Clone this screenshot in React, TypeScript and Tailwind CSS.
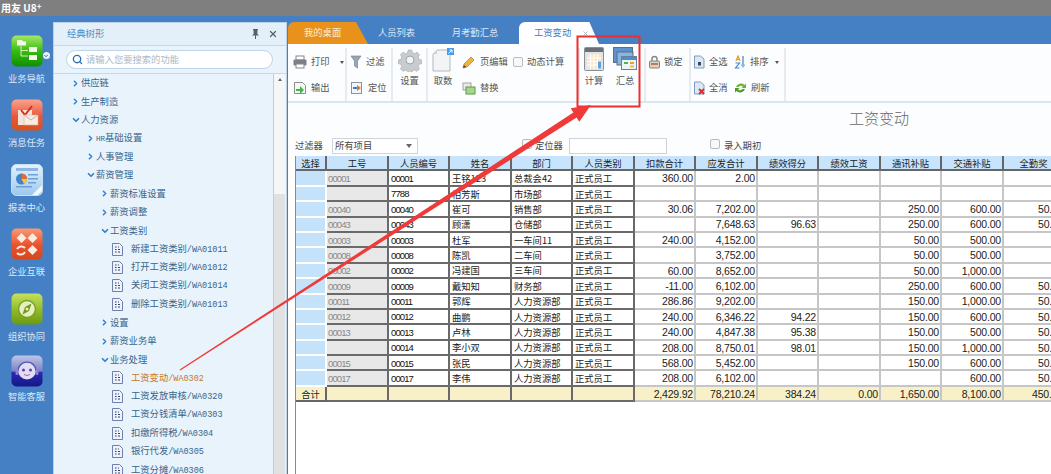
import React from "react";
import { ChevronDown, ChevronRight, Search, X } from "lucide-react";

const cjk = '"Noto Sans CJK SC", "Liberation Sans", sans-serif';

const tree: { t: string; l: number; k: "o" | "c" | "f"; a?: boolean }[] = [
  { t: "供应链", l: 0, k: "c" },
  { t: "生产制造", l: 0, k: "c" },
  { t: "人力资源", l: 0, k: "o" },
  { t: "HR基础设置", l: 1, k: "c" },
  { t: "人事管理", l: 1, k: "c" },
  { t: "薪资管理", l: 1, k: "o" },
  { t: "薪资标准设置", l: 2, k: "c" },
  { t: "薪资调整", l: 2, k: "c" },
  { t: "工资类别", l: 2, k: "o" },
  { t: "新建工资类别/WA01011", l: 3, k: "f" },
  { t: "打开工资类别/WA01012", l: 3, k: "f" },
  { t: "关闭工资类别/WA01014", l: 3, k: "f" },
  { t: "删除工资类别/WA01013", l: 3, k: "f" },
  { t: "设置", l: 2, k: "c" },
  { t: "薪资业务单", l: 2, k: "c" },
  { t: "业务处理", l: 2, k: "o" },
  { t: "工资变动/WA0302", l: 3, k: "f", a: true },
  { t: "工资发放审核/WA0320", l: 3, k: "f" },
  { t: "工资分钱清单/WA0303", l: 3, k: "f" },
  { t: "扣缴所得税/WA0304", l: 3, k: "f" },
  { t: "银行代发/WA0305", l: 3, k: "f" },
  { t: "工资分摊/WA0306", l: 3, k: "f" },
];

const headers = ["选择", "工号", "人员编号", "姓名", "部门", "人员类别", "扣款合计", "应发合计", "绩效得分", "绩效工资", "通讯补贴", "交通补贴", "全勤奖"];

const rows: string[][] = [
  ["00001", "00001", "王铭123", "总裁会42", "360.00", "2.00", "", "", "", "", ""],
  ["", "7788", "柏芳斯", "市场部", "", "", "", "", "", "", ""],
  ["00040", "00040", "崔可", "销售部", "30.06", "7,202.00", "", "", "250.00", "600.00", "50.00"],
  ["00043", "00043", "顾潇", "仓储部", "", "7,648.63", "96.63", "", "250.00", "600.00", "50.00"],
  ["00003", "00003", "杜军", "一车间11", "240.00", "4,152.00", "", "", "50.00", "500.00", ""],
  ["00008", "00008", "陈凯", "二车间", "", "3,752.00", "", "", "50.00", "500.00", ""],
  ["00002", "00002", "冯建国", "三车间", "60.00", "8,652.00", "", "", "50.00", "1,000.00", ""],
  ["00009", "00009", "戴知知", "财务部", "-11.00", "6,102.00", "", "", "250.00", "600.00", "50.00"],
  ["00011", "00011", "郭辉", "人力资源部", "286.86", "9,202.00", "", "", "150.00", "1,000.00", "50.00"],
  ["00012", "00012", "曲鹏", "人力资源部", "240.00", "6,346.22", "94.22", "", "150.00", "600.00", "50.00"],
  ["00013", "00013", "卢林", "人力资源部", "240.00", "4,847.38", "95.38", "", "150.00", "500.00", "50.00"],
  ["", "00014", "李小双", "人力资源部", "208.00", "8,750.01", "98.01", "", "150.00", "1,000.00", "50.00"],
  ["00015", "00015", "张民", "人力资源部", "568.00", "5,452.00", "", "", "150.00", "600.00", "50.00"],
  ["00017", "00017", "李伟", "人力资源部", "208.00", "6,102.00", "", "", "", "600.00", "50.00"],
];
const totals = ["2,429.92", "78,210.24", "384.24", "0.00", "1,650.00", "8,100.00", "450.00"];

function DocIcon() {
  return (
    <svg width="11" height="13" viewBox="0 0 11 13" className="shrink-0">
      <path d="M.5.5h7l3 3v9H.5z" fill="#eef2fa" stroke="#6f7fae" />
      <path d="M3 4h1.6M3 6.5h1.6M3 9h1.6M6 6.5h2M6 9h2M6 4h1" stroke="#34406e" strokeWidth="1" />
    </svg>
  );
}

function TreeLabel({ t }: { t: string }) {
  const i = t.indexOf("/");
  if (t.startsWith("HR")) {
    return <><span className="font-['Liberation_Mono'] text-[7.500px]">HR</span>{t.slice(2)}</>;
  }
  if (i < 0) return <>{t}</>;
  return <>{t.slice(0, i)}<span className="font-['Liberation_Mono'] text-[8.500px]">{t.slice(i)}</span></>;
}

function TreeRow({ t, l, k, a }: { t: string; l: number; k: string; a?: boolean }) {
  const pad = l === 3 ? "pl-[58px]" : l === 2 ? "pl-[46px]" : l === 1 ? "pl-[32px]" : "pl-[17px]";
  return (
    <div className={`flex h-[18.43px] items-center ${pad}`}>
      {k === "c" && <ChevronRight size={9} strokeWidth={4} color="#2f7fd4" className="mr-[1px] shrink-0" />}
      {k === "o" && <ChevronDown size={10} strokeWidth={4} color="#2f7fd4" className="shrink-0" />}
      {k === "f" && <DocIcon />}
      <span className={`${k === "f" ? "ml-[8px]" : ""} whitespace-nowrap text-[9.3px] ${a ? "text-[#c9782a]" : "text-[#37658c]"}`}><TreeLabel t={t} /></span>
    </div>
  );
}

function RailItem({ icon, label, gap, lg = "mt-[4px]" }: { icon: React.ReactNode; label: string; gap: string; lg?: string }) {
  return (
    <div className={`flex w-[53px] flex-col items-center ${gap}`}>
      {icon}
      <span className={`${lg} whitespace-nowrap text-[9.3px] leading-[14px] text-[#dbe9f7]`}>{label}</span>
    </div>
  );
}

const IconBox = ({ children }: { children: React.ReactNode }) => (
  <svg width="32" height="32" viewBox="0 0 32 32" className="block">{children}</svg>
);

function NavIcon() {
  return (
    <div className="relative">
      <IconBox>
        <defs>
          <linearGradient id="g1" x1="0" y1="0" x2="0" y2="1"><stop offset="0" stopColor="#a4ea63" /><stop offset=".5" stopColor="#37bb12" /><stop offset="1" stopColor="#0f8f00" /></linearGradient>
        </defs>
        <rect x=".5" y=".5" width="31" height="31" rx="5" fill="url(#g1)" />
        <path d="M6 5h5l1 1.5h3v4H6z" fill="#f5f8e8" />
        <path d="M10 11v10h7M10 15.5h7" stroke="#d5f3b5" strokeWidth="1" fill="none" />
        <rect x="18" y="12" width="8" height="5" fill="#f5f8e8" />
        <rect x="18" y="20" width="8" height="5" fill="#f5f8e8" />
      </IconBox>
      <span className="absolute -right-[7px] top-[17px] flex h-[7px] w-[7px] items-center justify-center rounded-full bg-[#e8f0f8]">
        <ChevronDown size={6} strokeWidth={4} color="#3a6fa8" />
      </span>
    </div>
  );
}
function MsgIcon() {
  return (
    <IconBox>
      <defs><linearGradient id="g2" x1="0" y1="0" x2="0" y2="1"><stop offset="0" stopColor="#f8a48c" /><stop offset=".55" stopColor="#e8563a" /><stop offset="1" stopColor="#d8501c" /></linearGradient></defs>
      <rect x=".5" y=".5" width="31" height="31" rx="5" fill="url(#g2)" />
      <rect x="7" y="11" width="14" height="15" fill="#f3e4da" />
      <path d="M10 11l4 5 7-9" stroke="#d92b20" strokeWidth="2" fill="none" />
      <rect x="13" y="16" width="14" height="10" fill="#f7ece4" stroke="#d9b3a0" strokeWidth=".6" />
      <path d="M13 16l7 5 7-5" stroke="#cf9d88" strokeWidth=".8" fill="none" />
    </IconBox>
  );
}
function ReportIcon() {
  return (
    <IconBox>
      <defs><linearGradient id="g3" x1="0" y1="0" x2="0" y2="1"><stop offset="0" stopColor="#e4f3fd" /><stop offset="1" stopColor="#9cc7ee" /></linearGradient></defs>
      <rect x=".5" y=".5" width="31" height="31" rx="5" fill="url(#g3)" stroke="#c9dff2" />
      <rect x="5" y="4" width="22" height="3" fill="#8db7e2" />
      <rect x="17" y="10" width="10" height="1.5" fill="#6f9fd3" />
      <rect x="17" y="14" width="10" height="1.5" fill="#6f9fd3" />
      <rect x="17" y="18" width="8" height="1.5" fill="#6f9fd3" />
      <rect x="5" y="22" width="16" height="1.5" fill="#6f9fd3" />
      <circle cx="10.500" cy="15" r="5.500" fill="#3f86c8" />
      <path d="M10.500 15V9.500a5.500 5.500 0 0 1 5.500 5.500z" fill="#e56a2b" />
      <path d="M10.500 15h5.500a5.500 5.500 0 0 1-3 4.900z" fill="#f2c83a" />
      <path d="M21 31l10-10v6l-4 4z" fill="#f2f8fd" />
    </IconBox>
  );
}
function LinkIcon() {
  return (
    <IconBox>
      <defs><linearGradient id="g4" x1="0" y1="0" x2="0" y2="1"><stop offset="0" stopColor="#f99a74" /><stop offset=".55" stopColor="#e8512c" /><stop offset="1" stopColor="#d6471d" /></linearGradient></defs>
      <rect x=".5" y=".5" width="31" height="31" rx="5" fill="url(#g4)" />
      <path d="M10.500 5l5 5-5 5-5-5zM21.500 5l5 5-5 5-5-5zM21.500 17l5 5-5 5-5-5z" fill="#fbeadf" />
      <path d="M6 21a5 5 0 0 1 8-1M14 24a5 5 0 0 1-8 1" stroke="#fbeadf" strokeWidth="2" fill="none" />
    </IconBox>
  );
}
function OrgIcon() {
  return (
    <IconBox>
      <defs><linearGradient id="g5" x1="0" y1="0" x2="0" y2="1"><stop offset="0" stopColor="#c5e25a" /><stop offset=".6" stopColor="#8ab526" /><stop offset="1" stopColor="#6c9a10" /></linearGradient></defs>
      <rect x=".5" y=".5" width="31" height="31" rx="5" fill="url(#g5)" />
      <circle cx="16" cy="16" r="8.500" fill="#e7eec2" stroke="#79a01f" strokeWidth="1.500" />
      <path d="M20.500 10.500l-2.500 7.500-6.500 3.500 2.500-7.500z" fill="#6f9a18" />
      <circle cx="16" cy="16" r="1.500" fill="#e7eec2" />
    </IconBox>
  );
}
function ServiceIcon() {
  return (
    <IconBox>
      <defs><linearGradient id="g6" x1="0" y1="0" x2="0" y2="1"><stop offset="0" stopColor="#bfc6e6" /><stop offset=".5" stopColor="#7b83c6" /><stop offset=".55" stopColor="#2a2ab0" /><stop offset="1" stopColor="#15158a" /></linearGradient></defs>
      <rect x=".5" y=".5" width="31" height="31" rx="5" fill="url(#g6)" />
      <circle cx="16" cy="15.500" r="9" fill="#e3ddf3" />
      <path d="M7 16a9 9 0 0 1 18 0" stroke="#5a5ab5" strokeWidth="1.500" fill="none" />
      <rect x="4.500" y="14" width="3" height="6" rx="1.500" fill="#8e82d8" />
      <rect x="24.500" y="14" width="3" height="6" rx="1.500" fill="#8e82d8" />
      <circle cx="12.500" cy="15" r="1.500" fill="#5a3fb0" />
      <circle cx="19.500" cy="15" r="1.500" fill="#5a3fb0" />
      <path d="M13 19.500q3 2 6 0" stroke="#b85ab0" strokeWidth="1" fill="none" />
    </IconBox>
  );
}

const S = ({ children, w = 14, h = 14 }: { children: React.ReactNode; w?: number; h?: number }) => (
  <svg width={w} height={h} viewBox={`0 0 ${w} ${h}`} className="shrink-0">{children}</svg>
);

const Caret = () => <span className="ml-[6px] h-0 w-0 border-x-[2.500px] border-t-[3px] border-x-transparent border-t-[#555]" />;

function Tool({ icon, label, children }: { icon: React.ReactNode; label: string; children?: React.ReactNode }) {
  return (
    <div className="flex h-[26px] items-center whitespace-nowrap text-[9.3px] text-[#555]">
      {icon}
      <span className="ml-[4px]">{label}</span>
      {children}
    </div>
  );
}

function BigTool({ icon, label }: { icon: React.ReactNode; label: string }) {
  return (
    <div className="flex flex-col items-center text-[9.3px] text-[#555]">
      <div className="flex h-[25px] items-start justify-center">{icon}</div>
      <span className="leading-[14px]">{label}</span>
    </div>
  );
}

const Sep = () => <div className="h-[53px] w-[2px] shrink-0 self-start bg-[#e6ebf2]" />;

const Group = ({ w, children }: { w: string; children: React.ReactNode }) => (
  <div className={`flex ${w} shrink-0 flex-col`}>{children}</div>
);

const Check = () => <span className="inline-block h-[10px] w-[10px] shrink-0 rounded-[2px] border border-[#b8bcc2] bg-[#f7f8f9]" />;

function Cell({ children, cls }: { children?: React.ReactNode; cls: string }) {
  return <div className={`flex min-w-0 items-center overflow-hidden whitespace-nowrap pt-[2px] ${cls}`}>{children}</div>;
}

const numFont = "font-['Liberation_Sans'] text-[10.500px] tracking-[-0.200px]";
const codeFont = "font-['Liberation_Sans'] text-[9.500px] tracking-[-0.900px]";
const darkB = "border-r-2 border-b-2 border-[#6a6a6a]";
const lightB = "border-r-2 border-b-2 border-[#c6c6c6]";

export default function App() {
  return (
    <div className="relative flex h-[474px] w-[1051px] flex-col overflow-hidden bg-[#4580c4]" style={{ fontFamily: cjk }}>
      {/* title bar */}
      <div className="flex h-[16px] shrink-0 items-center bg-[#7f7f7f] pl-[1px] text-[10px] font-bold leading-none text-white">
        用友 U8<span className="mb-[4px] text-[8px] leading-none">+</span>
      </div>

      <div className="flex min-h-0 flex-1">
        {/* rail */}
        <div className="flex w-[53px] shrink-0 flex-col pt-[19px]">
          <RailItem icon={<NavIcon />} label="业务导航" gap="" />
          <RailItem icon={<MsgIcon />} label="消息任务" gap="mt-[14px]" />
          <RailItem icon={<ReportIcon />} label="报表中心" gap="mt-[15px]" />
          <RailItem icon={<LinkIcon />} label="企业互联" gap="mt-[14px]" />
          <RailItem icon={<OrgIcon />} label="组织协同" gap="mt-[15px]" />
          <RailItem icon={<ServiceIcon />} label="智能客服" gap="mt-[12px]" lg="mt-[2px]" />
        </div>

        {/* tree panel */}
        <div className="mt-[6px] flex w-[234px] shrink-0 flex-col border border-b-0 border-[#bcd2e8] bg-[#e9f3fb]">
          <div className="flex h-[23px] shrink-0 items-center border-b border-[#c5d8ea] bg-[#e4f0f9] pl-[13px] pr-[8px]">
            <span className="text-[9.3px] text-[#4f8cc4]">经典树形</span>
            <svg width="9" height="10" viewBox="0 0 9 10" className="ml-auto mr-[8px]">
              <path d="M2 0h5v1l-.6.500V5l1.600 1.500H1L2.600 5V1.500L2 1zM4 6.500h1V10H4z" fill="#55606c" />
            </svg>
            <X size={10} strokeWidth={3} color="#55606c" />
          </div>
          <div className="flex h-[28px] shrink-0 items-center border-b border-[#c5d8ea] pl-[12px]">
            <div className="flex h-[19px] w-[207px] items-center rounded-full border border-[#bcd3e8] bg-white pl-[5px]">
              <Search size={11} strokeWidth={3} color="#2c6fb5" />
              <span className="ml-[3px] text-[9.3px] text-[#a9b9c8]">请输入您要搜索的功能</span>
            </div>
          </div>
          <div className="flex min-h-0 flex-1">
            <div className="min-w-0 flex-1 overflow-hidden">
              {tree.map((r) => <TreeRow key={r.t} {...r} />)}
            </div>
            <div className="mr-[1px] flex w-[12px] shrink-0 flex-col items-center border-l border-[#c8ccd0] bg-[#f4f6f8]">
              <span className="mt-[4px] h-0 w-0 border-x-[2.500px] border-b-[3px] border-x-transparent border-b-[#666]" />
              <div className="mt-[113px] w-full flex-1 bg-[#dfe1e3]" />
            </div>
          </div>
        </div>

        {/* main */}
        <div className="ml-[1px] flex min-w-0 flex-1 flex-col overflow-hidden">
          {/* tabs */}
          <div className="flex h-[28px] shrink-0 items-end text-[9.3px]">
            <div className="flex h-[22px] w-[80px] items-center rounded-tl-[6px] bg-[#e8921c] pl-[16px] text-[#fbeed8] [clip-path:polygon(0_0,85%_0,100%_100%,0_100%)]">我的桌面</div>
            <div className="flex h-[22px] w-[57px] items-center justify-center whitespace-nowrap text-[#dce9f7]">人员列表</div>
            <div className="ml-[27px] flex h-[22px] w-[46px] items-center justify-center whitespace-nowrap text-[#dce9f7]">月考勤汇总</div>
            <div className="ml-[21px] flex h-[22px] w-[80px] items-center rounded-t-[6px] bg-white pl-[15px] text-[#3f80c4] [clip-path:polygon(0_0,88%_0,100%_100%,0_100%)]">
              工资变动
              <X size={7} strokeWidth={3} color="#aab4be" className="ml-[11px]" />
            </div>
          </div>

          <div className="flex min-h-0 flex-1 flex-col bg-[#fcfdff]">
            {/* toolbar */}
            <div className="flex h-[59px] shrink-0 border-b-[2px] border-[#dbe5f0] pt-[4px]">
              <Group w="w-[57px] pl-[5px] pt-[1px]">
                <Tool label="打印" icon={<S><rect x="3" y="1" width="8" height="4" fill="#fff" stroke="#888" /><rect x=".5" y="4.500" width="13" height="6" rx="1" fill="#7a8088" /><rect x="3" y="9" width="8" height="4" fill="#fff" stroke="#888" /></S>}><span className="ml-[4px]" /><Caret /></Tool>
                <Tool label="输出" icon={<S><path d="M1.500 1.500h8l3 3v8h-11z" fill="#f6f8f6" stroke="#8a918a" /><path d="M3 8h4V5l4 4-4 4v-3H3z" fill="#46b84a" /></S>} />
              </Group>
              <Sep />
              <Group w="w-[44px] pl-[3px] pt-[1px]">
                <Tool label="过滤" icon={<S w={12}><path d="M1 1h10L7.500 6v7l-3-2V6z" fill="#9aa6b4" stroke="#6e7a88" strokeWidth=".6" /></S>} />
                <Tool label="定位" icon={<S><rect x="1.500" y="1.500" width="10" height="11" fill="#f1f4f8" stroke="#8a94a0" /><path d="M3 7h5" stroke="#3a7ac0" strokeWidth="2" /><path d="M7 4l4 3-4 3z" fill="#e0762a" /></S>} />
              </Group>
              <Sep />
              <div className="w-[33px] shrink-0">
                <BigTool label="设置" icon={<svg width="24" height="24" viewBox="0 0 24 24"><path d="M10 1h4l.7 3 2.500 1 2.600-1.600 2.800 2.800-1.600 2.600 1 2.500 3 .7v4l-3 .7-1 2.500 1.600 2.600-2.800 2.800-2.600-1.600-2.500 1-.7 3h-4l-.7-3-2.500-1-2.600 1.600-2.800-2.800 1.600-2.600-1-2.500-3-.7v-4l3-.7 1-2.500L1.500 6.200l2.800-2.800 2.600 1.600 2.500-1z" transform="translate(1.200 1.200) scale(.9)" fill="#c9cccf" stroke="#a8acb0" strokeWidth=".8" /><circle cx="12" cy="12" r="4" fill="#f2f3f4" stroke="#a0a4a8" /></svg>} />
              </div>
              <Sep />
              <div className="w-[30px] shrink-0">
                <BigTool label="取数" icon={<svg width="22" height="24" viewBox="0 0 22 24"><path d="M5 2h13v21H1V6z" fill="#f3f4f5" stroke="#b4b8bc" /><path d="M5 2v4H1z" fill="#d4d7da" /><rect x="15" y="0" width="7" height="7" fill="#4a9be8" /><path d="M16.500 5.500l3.500-3.500M17.500 2H20v2.500" stroke="#fff" fill="none" /></svg>} />
              </div>
              <Group w="w-[55px] pl-[4px] pt-[1px]">
                <Tool label="页编辑" icon={<S><path d="M1 13l1-4 7-7 3 3-7 7z" fill="#f0b43a" stroke="#a36a1a" strokeWidth=".6" /><path d="M1 13l1-3 2 2z" fill="#444" /></S>} />
                <Tool label="替换" icon={<S><rect x="1" y="2" width="8" height="7" fill="#e8eaec" stroke="#a0a4a8" /><rect x="4" y="6" width="9" height="7" fill="#a6d68a" stroke="#5f9a44" /></S>} />
              </Group>
              <div className="w-[65px] shrink-0 pt-[1px]">
                <Tool label="动态计算" icon={<Check />} />
              </div>
              <Sep />
              <div className="flex w-[64px] shrink-0 pl-[3px]">
                <div className="w-[22px]"><BigTool label="计算" icon={<svg width="20" height="24" viewBox="0 0 20 24" className="-mt-[1px]"><rect x=".5" y=".5" width="19" height="23" rx="1" fill="#dfe3e6" stroke="#8a8f94" /><rect x="1" y="1" width="18" height="4" fill="#6a7078" /><rect x="3" y="7" width="14" height="15" fill="#f6e7cf" /><path d="M3 11h14M3 14.500h14M3 18h14M6.500 7v15M10 7v15M13.500 7v15" stroke="#fff" /><rect x="14" y="14.500" width="3" height="7" fill="#5aa3e0" /></svg>} /></div>
                <div className="ml-[8px] w-[24px]"><BigTool label="汇总" icon={<svg width="24" height="24" viewBox="0 0 24 24" className="-mt-[1px]"><rect x=".5" y=".5" width="19" height="15" fill="#5c93cf" stroke="#5a6f88" /><rect x="4" y="5" width="16" height="13" fill="#8ab6de" stroke="#5a6f88" /><rect x="8.500" y="9.500" width="15" height="13" fill="#eef3f7" stroke="#6a7f98" /><rect x="9" y="10" width="14" height="3" fill="#4b8fd0" /><rect x="11" y="15" width="4" height="2" fill="#5bb04a" /><rect x="17" y="15" width="4" height="2" fill="#e8a02a" /><rect x="17" y="18.500" width="4" height="2" fill="#f0c040" /></svg>} /></div>
              </div>
              <Sep />
              <Group w="w-[43px] pl-[3px] pt-[1px]">
                <Tool label="锁定" icon={<S w={11}><path d="M3 6V4a2.500 2.500 0 0 1 5 0v2" stroke="#888" strokeWidth="1.500" fill="none" /><rect x=".5" y="6" width="10" height="7" rx="1" fill="#d8d2c4" stroke="#8a8478" /><path d="M2 9h7" stroke="#c25a2a" strokeWidth="1.500" /></S>} />
              </Group>
              <Sep />
              <Group w="w-[43px] pl-[2px] pt-[1px]">
                <Tool label="全选" icon={<S w={12}><path d="M1.500 1h6l3.500 3v9h-9.500z" fill="#dbe8f6" stroke="#7f9cc0" /><rect x="5" y="7" width="3" height="3.500" fill="#445" /></S>} />
                <Tool label="全消" icon={<S w={12}><path d="M1.500 1h6l3.500 3v9h-9.500z" fill="#dbe8f6" stroke="#7f9cc0" /><path d="M6 8l5 5M11 8l-5 5" stroke="#e02a2a" strokeWidth="1.800" /></S>} />
              </Group>
              <Group w="w-[50px] pt-[1px]">
                <Tool label="排序" icon={<S w={12}><path d="M2 6l2-5 2 5M3 4.500h2" stroke="#e89a1c" strokeWidth="1.200" fill="none" /><path d="M1.500 8h4l-4 5h4" stroke="#3a8ad8" strokeWidth="1.200" fill="none" /><path d="M9 1v10" stroke="#8ab4e0" strokeWidth="2" /><path d="M6.500 9.500L9 13l2.500-3.500z" fill="#8ab4e0" /></S>}><Caret /></Tool>
                <Tool label="刷新" icon={<S w={13}><path d="M2 6a5 4.500 0 0 1 8.500-2L12 2.500V7H7.500l1.500-1.500A3 2.500 0 0 0 4.500 6z" fill="#6eb52e" /><path d="M11 8a5 4.500 0 0 1-8.500 2L1 11.500V7h4.500L4 8.500A3 2.500 0 0 0 8.500 8z" fill="#4f9a22" /></S>} />
              </Group>
              <Sep />
              <div className="flex-1" />
            </div>

            {/* title */}
            <div className="flex h-[32px] shrink-0 items-end justify-end pb-[6px] pr-[142px]">
              <span className="text-[15px] font-light leading-[20px] text-[#666]" style={{ fontFamily: '"Liberation Serif", "Noto Sans CJK SC", serif' }}>工资变动</span>
            </div>

            {/* filter */}
            <div className="flex h-[21px] shrink-0 items-center pl-[7px] text-[9.3px] text-[#444]">
              <span className="w-[37px]">过滤器</span>
              <div className="flex h-[16px] w-[86px] items-center justify-between border border-[#d0d4d8] bg-white pl-[2px] pr-[5px]">
                所有项目
                <span className="h-0 w-0 border-x-[3px] border-t-[4px] border-x-transparent border-t-[#666]" />
              </div>
              <span className="ml-[104px]"><Check /></span>
              <span className="ml-[3px] w-[34px]">定位器</span>
              <div className="h-[16px] w-[98px] border border-[#d0d4d8] bg-white" />
              <span className="ml-[43px]"><Check /></span>
              <span className="ml-[4px]">录入期初</span>
            </div>

            {/* grid */}
            <div className="min-h-0 flex-1 bg-white pl-[7px]">
              <div className="h-full border-l border-[#8a8a8a]">
                <div className="grid w-[770px] auto-rows-[15.4px] grid-cols-[31px_62px_61px_62px_61px_62px_61px_62px_61px_62px_61px_62px_61px] text-[9.3px] text-[#222]">
                  {headers.map((h) => (
                    <Cell key={h} cls="justify-center border-r-2 border-b-2 border-[#666] bg-[#c8e4fc]">{h}</Cell>
                  ))}
                  {rows.map((r, i) => (
                    <React.Fragment key={i}>
                      <Cell cls="border-r-2 border-b-2 border-[#ffffff] bg-[#c5e2fb]" />
                      <Cell cls={`${darkB} bg-[#e8e8e8] pl-[1px] text-[#888] ${codeFont}`}>{r[0]}</Cell>
                      <Cell cls={`${darkB} pl-[2px] text-[#111] ${codeFont}`}>{r[1]}</Cell>
                      <Cell cls={`${darkB} pl-[2px]`}>{r[2]}</Cell>
                      <Cell cls={`${darkB} pl-[2px]`}>{r[3]}</Cell>
                      <Cell cls={`${darkB} pl-[2px]`}>正式员工</Cell>
                      {r.slice(4).map((v, j) => (
                        <Cell key={j} cls={`${lightB} justify-end pr-[1px] ${numFont} ${j === 6 ? "!justify-start pl-[34px]" : ""}`}>{v}</Cell>
                      ))}
                    </React.Fragment>
                  ))}
                  <Cell cls="justify-center border-r-2 border-b-2 border-[#666] bg-[#f8f1c8]">合计</Cell>
                  {[0, 1, 2, 3, 4].map((k) => <Cell key={k} cls={`${darkB} bg-[#f8f1c8]`} />)}
                  {totals.map((v, j) => (
                    <Cell key={j} cls={`${lightB} justify-end bg-[#f8f1c8] pr-[1px] ${numFont} ${j === 6 ? "!justify-start pl-[28px]" : ""}`}>{v}</Cell>
                  ))}
                </div>
              </div>
            </div>
          </div>
        </div>
      </div>

      {/* annotation overlay */}
      <svg width="1051" height="474" viewBox="0 0 1051 474" className="pointer-events-none absolute left-0 top-0">
        <rect x="577.500" y="36.500" width="62" height="70" fill="none" stroke="#ec2f2f" strokeWidth="2" />
        <path d="M179.700 369.600 L573.400 112.500 L570.700 108.300 L591 105 L579.300 121.700 L576.600 117.500 L180.300 370.400 Z" fill="#f03a3a" />
      </svg>
    </div>
  );
}
